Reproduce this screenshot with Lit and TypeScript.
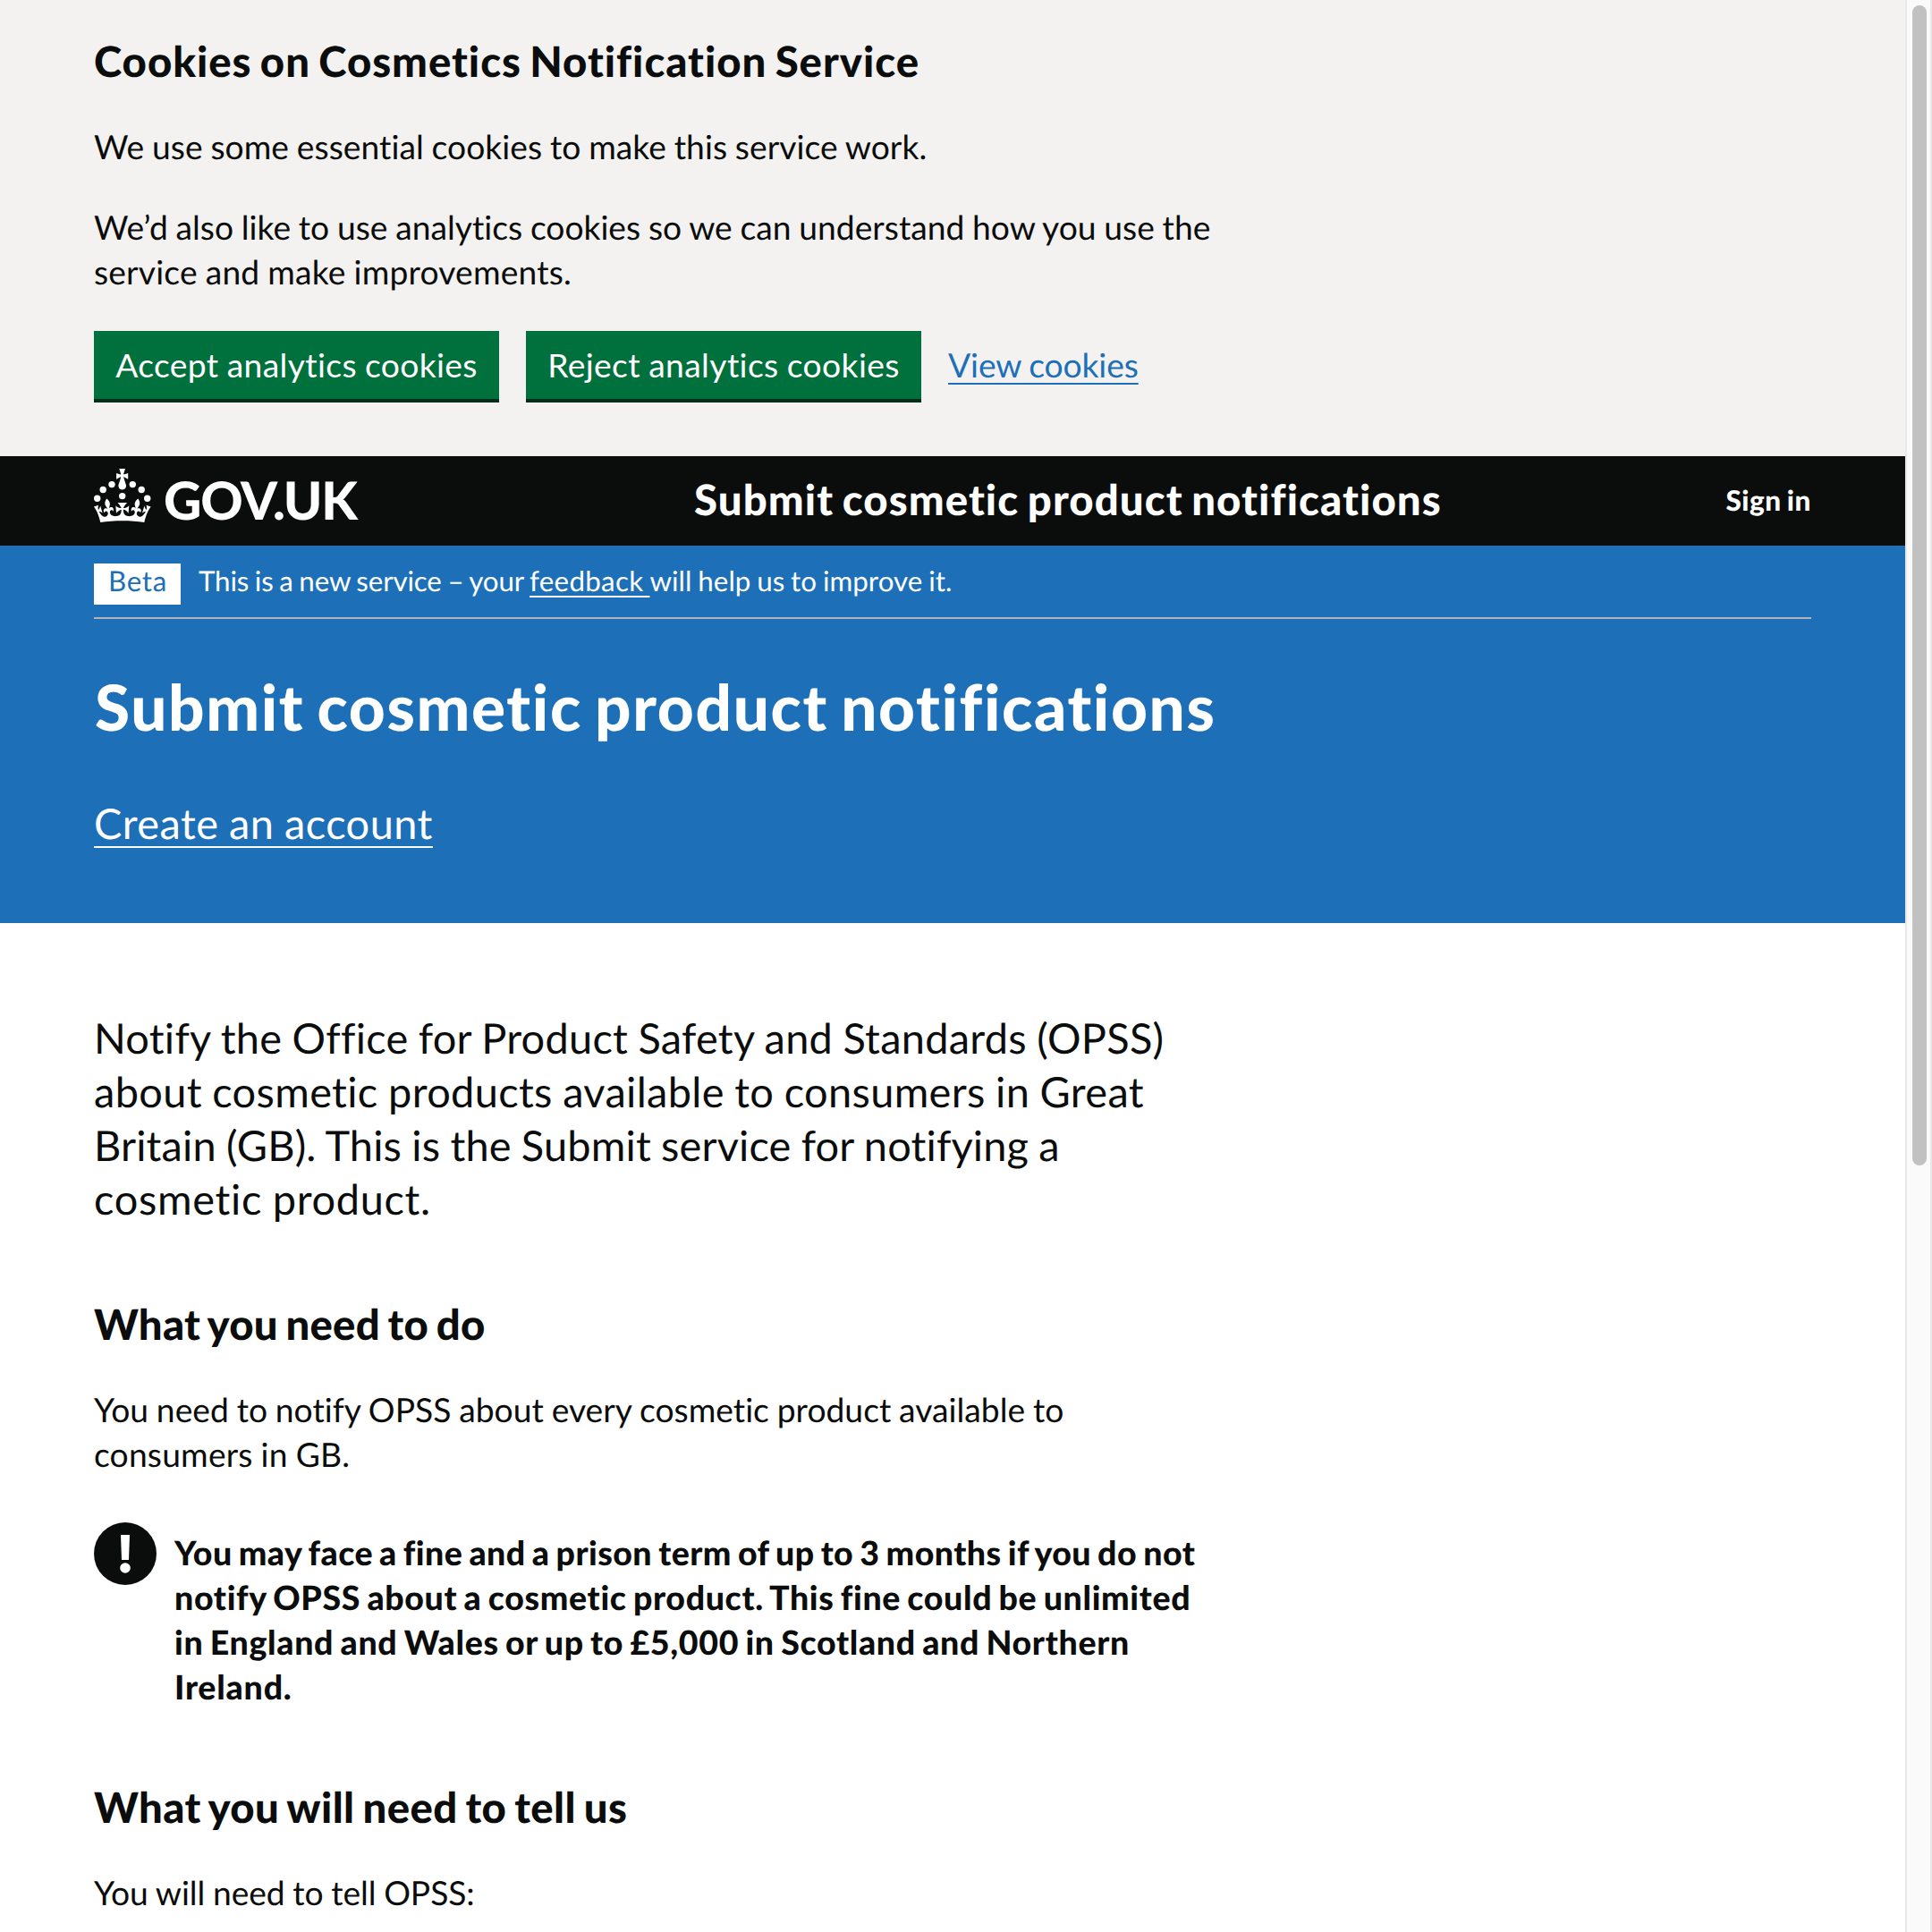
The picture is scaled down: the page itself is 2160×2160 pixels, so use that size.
import { LitElement, html, css } from 'lit';
import { customElement } from 'lit/decorators.js';

interface Line {
  text: string;
  /** Letter spacing in pixels. */
  track: number;
}

const l = (text: string, track: number): Line => ({ text, track });

const cookieHeading = [l('Cookies on Cosmetics Notification Service', 0.974)];
const cookieEssential = [l('We use some essential cookies to make this service work.', 0.05)];
const cookieAnalytics = [
  l('We’d also like to use analytics cookies so we can understand how you use the', 0.011),
  l('service and make improvements.', 0.189),
];
const lead = [
  l('Notify the Office for Product Safety and Standards (OPSS)', 0.27),
  l('about cosmetic products available to consumers in Great', 0.355),
  l('Britain (GB). This is the Submit service for notifying a', 0.165),
  l('cosmetic product.', 0.685),
];
const duty = [
  l('You need to notify OPSS about every cosmetic product available to', 0.031),
  l('consumers in GB.', 0.2),
];
const warning = [
  l('You may face a fine and a prison term of up to 3 months if you do not', 0.453),
  l('notify OPSS about a cosmetic product. This fine could be unlimited', 0.65),
  l('in England and Wales or up to £5,000 in Scotland and Northern', 0.677),
  l('Ireland.', 0.8),
];

@customElement('app-root')
export class AppRoot extends LitElement {
  static styles = css`
    :host {
      display: flex;
      width: 2160px;
      height: 2160px;
      overflow: hidden;
      background: #fff;
      color: #0b0c0c;
      font-family: Lato, 'Liberation Sans', sans-serif;
      font-size: 37.2px;
      line-height: 50px;
      font-variant-ligatures: none;
      text-rendering: geometricPrecision;
    }
    * { box-sizing: border-box; margin: 0; }
    .page { width: 2130px; flex: none; }
    .line { display: block; white-space: pre; word-spacing: -0.02em; }
    .medium { font-size: 46.9px; line-height: 60px; }
    .bold { font-weight: 900; }
    .bold .line { word-spacing: -0.06em; }
    .bold.medium { font-size: 47.3px; }
    a { color: inherit; text-decoration: underline; text-decoration-thickness: 2px; text-decoration-skip-ink: none; }

    .banner { height: 510px; padding: 39px 105px 0; background: #f3f2f1; }
    .banner .first { margin-top: 40px; }
    .banner .second { margin-top: 40px; }
    .actions { display: flex; margin-top: 41px; height: 76px; align-items: center; }
    .button {
      height: 76px;
      display: flex;
      align-items: center;
      justify-content: center;
      border: 0;
      padding: 0;
      margin-right: 30px;
      background: #00703c;
      color: #fff;
      font: inherit;
      box-shadow: 0 4px 0 #002d18;
    }
    .accept { width: 453px; }
    .reject { width: 442px; }
    .view { color: #1d70b8; text-underline-offset: 6px; }

    .header { height: 100px; padding: 0 105px; background: #0b0c0c; color: #fff; display: flex; align-items: center; }
    .crown { width: 64px; height: 60px; margin-top: -12px; fill: #fff; flex: none; }
    .brand { width: 607px; flex: none; padding-left: 14px; margin-top: -3px; font-size: 58.6px; line-height: 60px; letter-spacing: -1.2px; }
    .title { flex: 1; margin-top: -2px; }
    .signin { margin-top: -2px; font-size: 31.5px; text-decoration: none; }

    .hero { height: 422px; padding: 20px 105px 0; background: #1d70b8; color: #fff; }
    .phase { display: flex; height: 62px; border-bottom: 2px solid #b1b4b6; font-size: 31.3px; line-height: 38px; }
    .phase .line { word-spacing: -0.04em; }
    .tag { width: 97px; height: 46px; margin-right: 20px; padding-left: 1px; background: #fff; color: #1d70b8; text-align: center; }
    .feedback { text-underline-offset: 5px; }
    .hero h1 { margin: 59px 0 0 1px; font-size: 71px; line-height: 80px; }
    .create { display: block; width: max-content; margin-top: 59px; text-underline-offset: 8px; }

    .main { padding: 98px 105px 0; }
    .main h2 { margin-top: 81px; }
    .main h2 + p { margin-top: 40px; }
    .warning { display: flex; margin-top: 51px; font-size: 37.5px; }
    .warning svg { width: 70px; height: 70px; margin-right: 20px; flex: none; }
    .warning p { padding-top: 9px; }
    .main .warning + h2 { margin-top: 80px; }

    .scroll { flex: none; width: 30px; height: 2160px; padding: 6px 0 0 6px; background: #fafafa; border: solid #e8e8e8; border-width: 0 2px; }
    .thumb { width: 16px; height: 1297px; border-radius: 8px; background: #c1c1c1; }
  `;

  private lines(items: Line[]) {
    return items.map((i) => html`<span class="line" style="letter-spacing:${i.track}px">${i.text}</span>`);
  }

  render() {
    return html`
      <div class="page">
        <section class="banner">
          <h2 class="medium bold">${this.lines(cookieHeading)}</h2>
          <p class="first">${this.lines(cookieEssential)}</p>
          <p class="second">${this.lines(cookieAnalytics)}</p>
          <div class="actions">
            <button class="button accept">${this.lines([l('Accept analytics cookies', 0.38)])}</button>
            <button class="button reject">${this.lines([l('Reject analytics cookies', 0.404)])}</button>
            <a class="view">${this.lines([l('View cookies', -0.1)])}</a>
          </div>
        </section>

        <header class="header">
          <svg class="crown" viewBox="0 0 64 60" aria-hidden="true">
            <circle cx="20" cy="17.6" r="3.7" />
            <circle cx="10.2" cy="23.5" r="3.7" />
            <circle cx="3.7" cy="33.2" r="3.7" />
            <circle cx="31.7" cy="30.6" r="3.7" />
            <circle cx="43.3" cy="17.6" r="3.7" />
            <circle cx="53.2" cy="23.5" r="3.7" />
            <circle cx="59.7" cy="33.2" r="3.7" />
            <path d="M33.1,9.8c.2-.1.3-.3.5-.5l4.6,2.4v-6.8l-4.6,1.5c-.1-.2-.3-.3-.5-.5l1.9-5.9h-6.7l1.9,5.9c-.2.1-.3.3-.5.5l-4.6-1.5v6.8l4.6-2.4c.1.2.3.3.5.5l-2.6,8c-.9,2.8,1.2,5.7,4.1,5.7h0c3,0,5.1-2.9,4.1-5.7l-2.6-8ZM37,37.9s-3.4,3.8-4.1,6.1c2.2,0,4.2-.5,6.4-2.8l-.7,8.5c-2-2.8-4.4-4.1-5.7-3.8.1,3.1.5,6.7,5.8,7.2,3.7.3,6.7-1.5,7-3.8.4-2.6-2-4.3-3.7-1.6-1.4-4.5,2.4-6.1,4.9-3.2-1.9-4.5-1.8-7.7,2.4-10.9,3,4,2.6,7.3-1.2,11.1,2.4-1.3,6.2,0,4,4.6-1.2-2.8-3.7-2.2-4.2.2-.3,1.7.7,3.7,3,4.2,1.9.3,4.7-.9,7-5.9-1.3,0-2.4.7-3.9,1.7l2.4-8c.6,2.3,1.4,3.7,2.2,4.5.6-1.6.5-2.8,0-5.3l5,1.8c-2.6,3.6-5.2,8.7-7.3,17.5-7.4-1.1-15.7-1.7-24.5-1.7h0c-8.8,0-17.1.6-24.5,1.7-2.1-8.9-4.7-13.9-7.3-17.5l5-1.8c-.5,2.5-.6,3.7,0,5.3.8-.8,1.6-2.3,2.2-4.5l2.4,8c-1.5-1-2.6-1.7-3.9-1.7,2.3,5,5.2,6.2,7,5.9,2.3-.4,3.3-2.4,3-4.2-.5-2.4-3-3.1-4.2-.2-2.2-4.6,1.6-6,4-4.6-3.7-3.7-4.2-7.1-1.2-11.1,4.2,3.2,4.3,6.4,2.4,10.9,2.5-2.8,6.3-1.3,4.9,3.2-1.8-2.7-4.1-1-3.7,1.6.3,2.3,3.3,4.1,7,3.8,5.4-.5,5.7-4.2,5.8-7.2-1.3-.2-3.7,1-5.7,3.8l-.7-8.5c2.2,2.3,4.2,2.7,6.4,2.8-.7-2.3-4.1-6.1-4.1-6.1h10.6,0Z" />
          </svg>
          <div class="brand bold">GOV.UK</div>
          <div class="title medium bold">${this.lines([l('Submit cosmetic product notifications', 1.109)])}</div>
          <a class="signin bold">${this.lines([l('Sign in', 0.55)])}</a>
        </header>

        <section class="hero">
          <div class="phase">
            <div class="tag">${this.lines([l('Beta', 0.7)])}</div>
            ${this.lines([l('This is a new service – your ', -0.13)])}
            <a class="feedback">${this.lines([l('feedback ', 0.3)])}</a>
            ${this.lines([l('will help us to improve it.', 0.049)])}
          </div>
          <h1 class="bold">${this.lines([l('Submit cosmetic product notifications', 1.635)])}</h1>
          <a class="create medium">${this.lines([l('Create an account', 0.48)])}</a>
        </section>

        <main class="main">
          <p class="medium">${this.lines(lead)}</p>
          <h2 class="medium bold">${this.lines([l('What you need to do', 0.245)])}</h2>
          <p>${this.lines(duty)}</p>
          <div class="warning bold">
            <svg viewBox="0 0 70 70" aria-hidden="true">
              <circle cx="35" cy="35" r="35" fill="#0b0c0c" />
              <path d="M30 14h10l-1 28h-8z" fill="#fff" />
              <circle cx="35" cy="51" r="5.8" fill="#fff" />
            </svg>
            <p>${this.lines(warning)}</p>
          </div>
          <h2 class="medium bold">${this.lines([l('What you will need to tell us', 0.437)])}</h2>
          <p>${this.lines([l('You will need to tell OPSS:', -0.055)])}</p>
        </main>
      </div>
      <div class="scroll"><div class="thumb"></div></div>
    `;
  }
}
